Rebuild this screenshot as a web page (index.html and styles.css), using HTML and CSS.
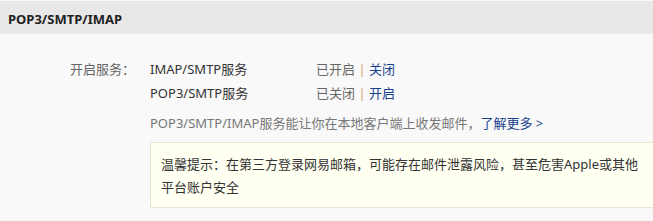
FILE: index.html
```html
<!DOCTYPE html>
<html>
<head>
<meta charset="utf-8">
<link rel="stylesheet" href="styles.css">
</head>
<body>
<div class="page">
  <div class="header">POP3/SMTP/IMAP</div>
  <div class="content">
    <div class="label">开启服务：</div>
    <div class="main">
      <div class="row">
        <span class="svc">IMAP/SMTP服务</span>
        <span class="status">已开启 <span class="sep">|</span> <a class="link">关闭</a></span>
      </div>
      <div class="row">
        <span class="svc">POP3/SMTP服务</span>
        <span class="status">已关闭 <span class="sep">|</span> <a class="link">开启</a></span>
      </div>
      <div class="desc">POP3/SMTP/IMAP服务能让你在本地客户端上收发邮件，<a class="link">了解更多 &gt;</a></div>
      <div class="notice">
        <div class="notice-text">温馨提示：在第三方登录网易邮箱，可能存在邮件泄露风险，甚至危害Apple或其他平台账户安全</div>
      </div>
    </div>
  </div>
</div>
</body>
</html>
```
FILE: styles.css
```css
html, body {
  margin: 0;
  padding: 0;
  background: #f9f9f9;
  overflow: hidden;
}
.page {
  width: 653px;
  height: 221px;
  overflow: hidden;
  font-family: "Noto Sans", "Noto Sans CJK SC", sans-serif;
  font-size: 13px;
  color: #333;
}
.header {
  margin-top: 1px;
  height: 33px;
  line-height: 36px;
  background: #e8e8e8;
  padding-left: 8px;
  font-weight: bold;
  font-size: 13px;
  color: #222;
}
.content {
  display: flex;
  padding-top: 23px;
}
.label {
  width: 135px;
  flex: none;
  text-align: right;
  color: #666;
  line-height: 24px;
}
.main {
  margin-left: 15px;
  flex: 1;
  min-width: 0;
}
.row {
  display: flex;
  line-height: 24px;
  color: #333;
}
.svc {
  width: 166px;
}
.status {
  color: #666;
}
.sep {
  color: #d4a86a;
}
.link {
  color: #1a3f8f;
  text-decoration: none;
}
.desc {
  margin-top: 6px;
  line-height: 24px;
  color: #777;
}
.notice {
  margin-top: 7px;
  width: 520px;
  border: 1px solid #e6e6cc;
  border-right: none;
  background: #fffff2;
  padding: 10px 0 8px 10px;
}
.notice-text {
  width: 484px;
  line-height: 23px;
  color: #333;
}
```
